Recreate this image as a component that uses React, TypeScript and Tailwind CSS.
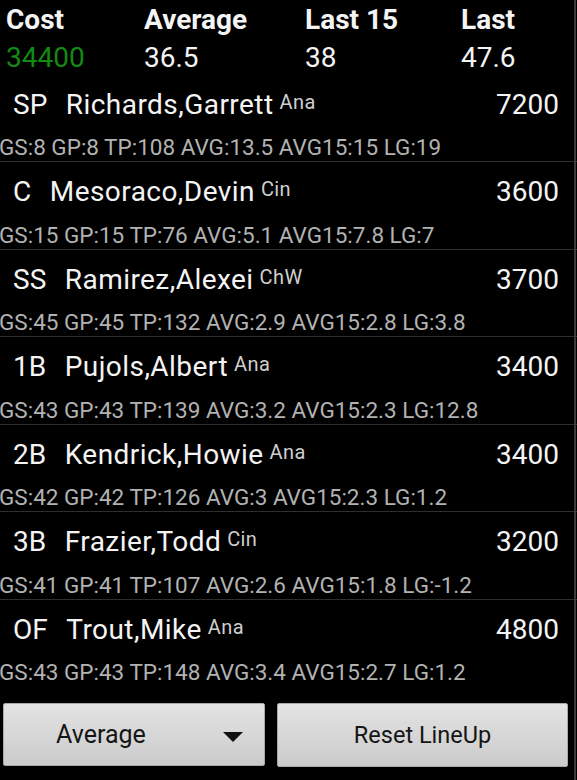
import React from "react";

type Player = {
  pos: string;
  name: string;
  team: string;
  price: string;
  stats: string;
};

const players: Player[] = [
  { pos: "SP", name: "Richards,Garrett", team: "Ana", price: "7200", stats: "GS:8 GP:8 TP:108 AVG:13.5 AVG15:15 LG:19" },
  { pos: "C", name: "Mesoraco,Devin", team: "Cin", price: "3600", stats: "GS:15 GP:15 TP:76 AVG:5.1 AVG15:7.8 LG:7" },
  { pos: "SS", name: "Ramirez,Alexei", team: "ChW", price: "3700", stats: "GS:45 GP:45 TP:132 AVG:2.9 AVG15:2.8 LG:3.8" },
  { pos: "1B", name: "Pujols,Albert", team: "Ana", price: "3400", stats: "GS:43 GP:43 TP:139 AVG:3.2 AVG15:2.3 LG:12.8" },
  { pos: "2B", name: "Kendrick,Howie", team: "Ana", price: "3400", stats: "GS:42 GP:42 TP:126 AVG:3 AVG15:2.3 LG:1.2" },
  { pos: "3B", name: "Frazier,Todd", team: "Cin", price: "3200", stats: "GS:41 GP:41 TP:107 AVG:2.6 AVG15:1.8 LG:-1.2" },
  { pos: "OF", name: "Trout,Mike", team: "Ana", price: "4800", stats: "GS:43 GP:43 TP:148 AVG:3.4 AVG15:2.7 LG:1.2" },
];

function Row({ p, last }: { p: Player; last: boolean }) {
  return (
    <div
      className={
        "h-[87.5px] pt-[12px] flex flex-col " +
        (last ? "" : "border-b border-[#2e2e2e]")
      }
    >
      <div className="h-[36px] flex items-start pl-[13px] pr-[18px]">
        <span className="text-[28px] leading-[36px] text-[#f4f4f4]">{p.pos}</span>
        <span className="ml-[18.5px] text-[28px] leading-[36px] tracking-[0.45px] text-[#f4f4f4]">{p.name}</span>
        <span className="ml-[6px] mt-[5px] text-[20px] leading-[20px] tracking-[0.4px] text-[#cfcfcf]">{p.team}</span>
        <span className="ml-auto text-[28px] leading-[36px] text-[#f4f4f4]">{p.price}</span>
      </div>
      <div className="mt-[11.5px] -ml-[1px] text-[22.5px] leading-[26px] text-[#b2b2b2] whitespace-nowrap">
        {p.stats}
      </div>
    </div>
  );
}

export default function App() {
  return (
    <div className="relative w-full h-[780px] bg-black overflow-hidden font-[Roboto,sans-serif]">
      <div className="h-[74.5px] pt-[1px] pl-[6px] grid grid-cols-[138px_161px_156px_1fr]">
        <div className="text-[28px] leading-[38px] font-bold text-[#f4f4f4]">Cost</div>
        <div className="text-[28px] leading-[38px] font-bold text-[#f4f4f4]">Average</div>
        <div className="text-[28px] leading-[38px] font-bold text-[#f4f4f4]">Last 15</div>
        <div className="text-[28px] leading-[38px] font-bold text-[#f4f4f4]">Last</div>
        <div className="text-[28px] leading-[38px] text-[#138a13]">34400</div>
        <div className="text-[28px] leading-[38px] text-[#f4f4f4]">36.5</div>
        <div className="text-[28px] leading-[38px] text-[#f4f4f4]">38</div>
        <div className="text-[28px] leading-[38px] text-[#f4f4f4]">47.6</div>
      </div>

      <div className="flex flex-col">
        {players.map((p, i) => (
          <Row key={p.pos} p={p} last={i === players.length - 1} />
        ))}
      </div>

      <div className="flex items-start pt-[16px] pl-[3px] gap-[12px]">
        <div className="w-[262px] h-[63px] flex items-center rounded-[2px] border border-[#a8a8a8] bg-gradient-to-b from-[#e3e3e3] to-[#cbcbcb]">
          <span className="pl-[52px] text-[25px] leading-[25px] text-[#151515]">Average</span>
          <svg className="ml-auto mr-[21px] mt-[4px]" width="20" height="10" viewBox="0 0 20 10">
            <polygon points="0,0 20,0 10,10" fill="#111" />
          </svg>
        </div>
        <div className="w-[291px] h-[64px] flex items-center justify-center rounded-[2px] border border-[#a8a8a8] bg-gradient-to-b from-[#e3e3e3] to-[#cbcbcb]">
          <span className="text-[23.5px] leading-[25px] text-[#151515]">Reset LineUp</span>
        </div>
      </div>

      <div className="absolute top-0 bottom-0 right-[1px] w-[2px] bg-[#3a3a3a]" />
    </div>
  );
}
